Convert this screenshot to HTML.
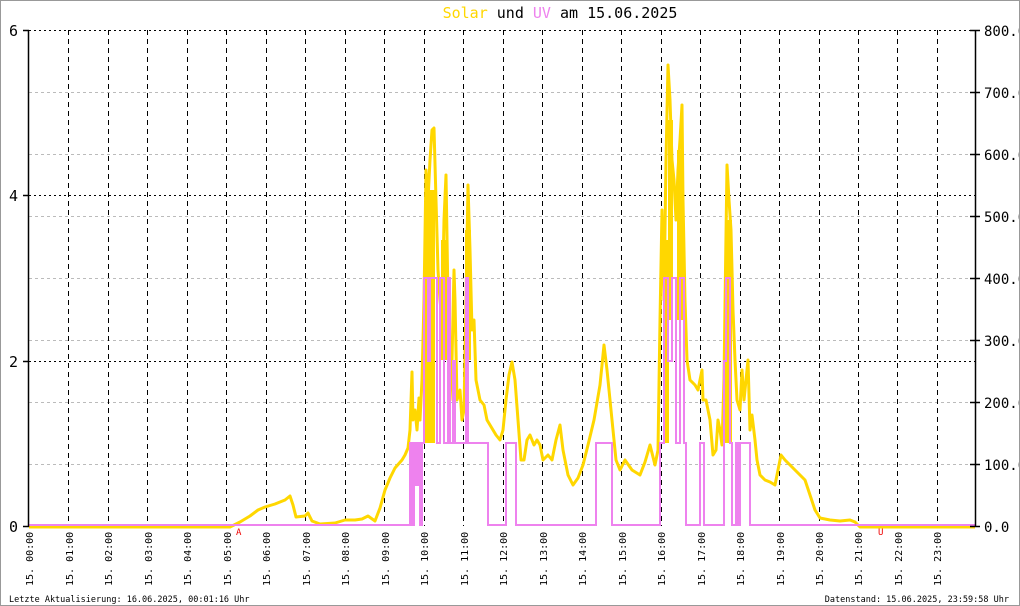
<!DOCTYPE html>
<html><head><meta charset="utf-8"><style>
html,body{margin:0;padding:0;background:#fff}
svg{display:block}
text{font-family:"DejaVu Sans Mono","Liberation Mono",monospace}
</style></head><body>
<svg width="1020" height="606" viewBox="0 0 1020 606">
<rect x="0.5" y="0.5" width="1019" height="605" fill="#fff" stroke="#999"/>
<text x="560" y="18" font-size="15" text-anchor="middle"><tspan fill="#ffd700">Solar</tspan><tspan fill="#000"> und </tspan><tspan fill="#ee82ee">UV</tspan><tspan fill="#000"> am 15.06.2025</tspan></text>
<g stroke="#bbb" stroke-dasharray="3,3" stroke-width="1">
<line x1="29" y1="92.5" x2="975" y2="92.5"/><line x1="29" y1="154.5" x2="975" y2="154.5"/><line x1="29" y1="216.5" x2="975" y2="216.5"/><line x1="29" y1="278.5" x2="975" y2="278.5"/><line x1="29" y1="340.5" x2="975" y2="340.5"/><line x1="29" y1="402.5" x2="975" y2="402.5"/><line x1="29" y1="464.5" x2="975" y2="464.5"/>
</g>
<g stroke="#000" stroke-dasharray="2,3" stroke-width="1">
<line x1="29" y1="30.5" x2="975" y2="30.5"/><line x1="29" y1="195.5" x2="975" y2="195.5"/><line x1="29" y1="361.5" x2="975" y2="361.5"/>
</g>
<g stroke="#000" stroke-dasharray="5,4" stroke-width="1">
<line x1="68.5" y1="30" x2="68.5" y2="526"/><line x1="108.5" y1="30" x2="108.5" y2="526"/><line x1="147.5" y1="30" x2="147.5" y2="526"/><line x1="187.5" y1="30" x2="187.5" y2="526"/><line x1="226.5" y1="30" x2="226.5" y2="526"/><line x1="266.5" y1="30" x2="266.5" y2="526"/><line x1="305.5" y1="30" x2="305.5" y2="526"/><line x1="345.5" y1="30" x2="345.5" y2="526"/><line x1="384.5" y1="30" x2="384.5" y2="526"/><line x1="424.5" y1="30" x2="424.5" y2="526"/><line x1="463.5" y1="30" x2="463.5" y2="526"/><line x1="503.5" y1="30" x2="503.5" y2="526"/><line x1="542.5" y1="30" x2="542.5" y2="526"/><line x1="582.5" y1="30" x2="582.5" y2="526"/><line x1="621.5" y1="30" x2="621.5" y2="526"/><line x1="661.5" y1="30" x2="661.5" y2="526"/><line x1="700.5" y1="30" x2="700.5" y2="526"/><line x1="740.5" y1="30" x2="740.5" y2="526"/><line x1="779.5" y1="30" x2="779.5" y2="526"/><line x1="819.5" y1="30" x2="819.5" y2="526"/><line x1="858.5" y1="30" x2="858.5" y2="526"/><line x1="897.5" y1="30" x2="897.5" y2="526"/><line x1="937.5" y1="30" x2="937.5" y2="526"/>
</g>
<g fill="#ffd700">
<rect x="425" y="190" width="10" height="253"/>
<rect x="441" y="240" width="6" height="120"/>
<rect x="465" y="230" width="6" height="130"/>
<rect x="663" y="240" width="6" height="203"/>
<rect x="668" y="120" width="5" height="200"/>
<rect x="677" y="150" width="6" height="170"/>
<rect x="725" y="220" width="7" height="223"/>
</g>
<polyline fill="none" stroke="#ffd700" stroke-width="3" stroke-linejoin="round" points="29,527 230,527 240,522 250,516 258,510 265,507 275,504 285,500 290,496 293,505 296,517 305,516 308,513 312,521 320,524 335,523 345,520 355,520 362,519 368,516 375,521 380,508 385,490 390,478 395,468 402,460 405,455 408,448 410,430 412,372 413,420 415,410 417,430 419,398 420,420 422,380 424,300 426,170 428,200 430,160 432,130 434,128 436,200 438,270 440,300 442,320 444,220 446,175 448,300 450,400 452,360 454,270 455,300 457,400 460,390 462,420 464,410 466,300 468,185 470,250 472,330 474,320 476,380 480,400 484,405 487,420 490,425 493,430 496,435 500,440 503,430 506,400 509,375 512,362 515,380 518,420 521,460 524,460 527,440 530,435 534,445 537,440 540,445 543,460 548,455 552,460 556,440 560,425 563,450 568,475 573,485 578,478 583,465 588,445 594,420 600,385 604,345 607,370 612,420 616,460 620,470 625,460 632,470 640,475 645,462 650,445 655,465 658,450 660,320 662,210 664,300 666,160 668,65 670,100 672,160 674,180 676,220 678,170 680,140 682,105 683,200 685,300 687,360 690,380 695,385 698,390 702,370 703,400 706,400 710,420 713,455 716,450 718,420 720,430 722,445 724,380 725,305 727,165 729,200 731,230 733,310 735,360 737,400 740,410 742,370 744,400 746,380 748,360 750,430 752,415 755,440 757,460 760,475 765,480 770,482 775,485 778,470 781,455 785,460 790,465 795,470 800,475 805,480 810,495 815,510 820,518 830,520 840,521 850,520 855,522 860,527 975,527"/>
<path fill="none" stroke="#ee82ee" stroke-width="2" d="M29,525 H410 V443 H412 V525 H414 V443 H416 V485 H418 V443 H420 V525 H422 V443 H424 V278 H428 V361 H430 V278 H437 V443 H440 V278 H444 V443 H448 V278 H450 V443 H453 V361 H455 V443 H466 V278 H468 V443 H488 V525 H506 V443 H516 V525 H596 V443 H612 V525 H660 V443 H664 V278 H668 V361 H672 V278 H676 V443 H680 V278 H684 V443 H686 V525 H700 V443 H704 V525 H724 V361 H726 V278 H730 V443 H732 V525 H736 V443 H738 V525 H740 V443 H750 V525 H975"/>
<g stroke="#000" stroke-width="1.5">
<line x1="28.5" y1="30" x2="28.5" y2="527"/><line x1="975.5" y1="30" x2="975.5" y2="527"/>
<line x1="23" y1="30.5" x2="29" y2="30.5"/><line x1="23" y1="195.5" x2="29" y2="195.5"/><line x1="23" y1="361.5" x2="29" y2="361.5"/><line x1="23" y1="526.5" x2="29" y2="526.5"/>
<line x1="970" y1="30.5" x2="980" y2="30.5"/><line x1="970" y1="92.5" x2="980" y2="92.5"/><line x1="970" y1="154.5" x2="980" y2="154.5"/><line x1="970" y1="216.5" x2="980" y2="216.5"/><line x1="970" y1="278.5" x2="980" y2="278.5"/><line x1="970" y1="340.5" x2="980" y2="340.5"/><line x1="970" y1="402.5" x2="980" y2="402.5"/><line x1="970" y1="464.5" x2="980" y2="464.5"/><line x1="970" y1="526.5" x2="980" y2="526.5"/>
</g>
<g font-size="15" fill="#000">
<text x="9" y="36">6</text><text x="9" y="201">4</text><text x="9" y="367">2</text><text x="9" y="532">0</text>
</g>
<g font-size="14" fill="#000">
<text x="984" y="36">800.0</text><text x="984" y="98">700.0</text><text x="984" y="160">600.0</text><text x="984" y="222">500.0</text><text x="984" y="284">400.0</text><text x="984" y="346">300.0</text><text x="984" y="408">200.0</text><text x="984" y="470">100.0</text><text x="984" y="532">0.0</text>
</g>
<line x1="1019.5" y1="0" x2="1019.5" y2="606" stroke="#999"/>
<text x="236" y="535" font-size="9" fill="#e00">A</text>
<text x="878" y="535" font-size="9" fill="#e00">U</text>
<g font-size="10" fill="#000">
<text transform="translate(33,586) rotate(-90)">15. 00:00</text>
<text transform="translate(73,586) rotate(-90)">15. 01:00</text>
<text transform="translate(112,586) rotate(-90)">15. 02:00</text>
<text transform="translate(152,586) rotate(-90)">15. 03:00</text>
<text transform="translate(191,586) rotate(-90)">15. 04:00</text>
<text transform="translate(231,586) rotate(-90)">15. 05:00</text>
<text transform="translate(270,586) rotate(-90)">15. 06:00</text>
<text transform="translate(310,586) rotate(-90)">15. 07:00</text>
<text transform="translate(349,586) rotate(-90)">15. 08:00</text>
<text transform="translate(389,586) rotate(-90)">15. 09:00</text>
<text transform="translate(428,586) rotate(-90)">15. 10:00</text>
<text transform="translate(468,586) rotate(-90)">15. 11:00</text>
<text transform="translate(507,586) rotate(-90)">15. 12:00</text>
<text transform="translate(547,586) rotate(-90)">15. 13:00</text>
<text transform="translate(586,586) rotate(-90)">15. 14:00</text>
<text transform="translate(626,586) rotate(-90)">15. 15:00</text>
<text transform="translate(665,586) rotate(-90)">15. 16:00</text>
<text transform="translate(705,586) rotate(-90)">15. 17:00</text>
<text transform="translate(744,586) rotate(-90)">15. 18:00</text>
<text transform="translate(784,586) rotate(-90)">15. 19:00</text>
<text transform="translate(823,586) rotate(-90)">15. 20:00</text>
<text transform="translate(862,586) rotate(-90)">15. 21:00</text>
<text transform="translate(902,586) rotate(-90)">15. 22:00</text>
<text transform="translate(941,586) rotate(-90)">15. 23:00</text>
</g>
<text x="9" y="602" font-size="8.5" fill="#000">Letzte Aktualisierung: 16.06.2025, 00:01:16 Uhr</text>
<text x="1009" y="602" font-size="8.5" fill="#000" text-anchor="end">Datenstand: 15.06.2025, 23:59:58 Uhr</text>
</svg>
</body></html>
